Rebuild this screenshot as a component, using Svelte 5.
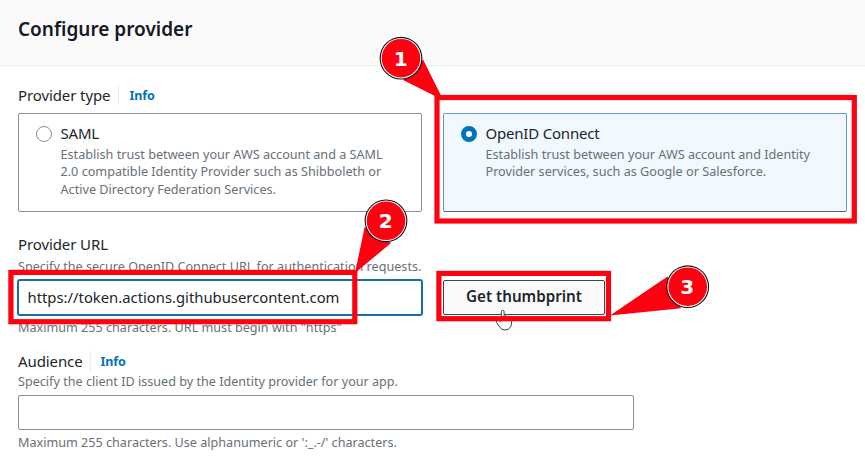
<script>
  const choices = [
    {
      title: 'SAML',
      lines: [
        'Establish trust between your AWS account and a SAML',
        '2.0 compatible Identity Provider such as Shibboleth or',
        'Active Directory Federation Services.'
      ]
    },
    {
      title: 'OpenID Connect',
      lines: [
        'Establish trust between your AWS account and Identity',
        'Provider services, such as Google or Salesforce.'
      ]
    }
  ];
  let selected = $state(1);
  let url = $state('https://token.actions.githubusercontent.com');
  let audience = $state('');

  const frames = [
    { x: 437, y: 97.5, w: 417.3, h: 123.5 },
    { x: 10.9, y: 272.4, w: 343.9, h: 49.3 },
    { x: 438.9, y: 273.4, w: 169.6, h: 45.3 }
  ];
  const callouts = [
    { n: 1, x: 401, y: 58.2, tail: '403,80 423,59.5 441.5,96.5 436,96.5' },
    { n: 2, x: 386, y: 220.8, tail: '364.7,227 391,243 355,273' },
    { n: 3, x: 687.7, y: 286.7, tail: '667.5,276.5 681,308.3 610,315.5' }
  ];
</script>

<main>
  <header><h2>Configure provider</h2></header>

  <section class="body">
    <div class="label">Provider type <a href="#info">Info</a></div>
    <div class="tiles">
      {#each choices as choice, i}
        <button class="tile" class:selected={selected === i} onclick={() => (selected = i)}>
          <span class="radio"></span>
          <span class="copy">
            <span class="title">{choice.title}</span>
            {#each choice.lines as line}<span class="line">{line}</span>{/each}
          </span>
        </button>
      {/each}
    </div>

    <div class="label url-label">Provider URL</div>
    <div class="help">Specify the secure OpenID Connect URL for authentication requests.</div>
    <div class="url-row">
      <input class="url" bind:value={url} />
      <button class="thumb">Get thumbprint</button>
    </div>
    <div class="help constraint">Maximum 255 characters. URL must begin with "https"</div>

    <div class="label aud-label">Audience <a href="#info">Info</a></div>
    <div class="help">Specify the client ID issued by the Identity provider for your app.</div>
    <input class="audience" bind:value={audience} />
    <div class="help aud-constraint">Maximum 255 characters. Use alphanumeric or ':_.-/' characters.</div>
  </section>

  <svg class="overlay" width="865" height="468" viewBox="0 0 865 468">
    <path
      d="M501.3 321V311.8Q501.3 310.3 502.7 310.3T504.1 311.8V316.4Q506 315.2 507 316.6Q509 315.6 509.6 317.2Q511.6 316.8 511.6 319V323Q511.6 326 510 327.6Q508.6 330 505 330Q501.5 330 500 327.5L496.7 322.6Q495.8 320.9 497.4 320.2Q499 319.7 501.3 322.4"
      fill="#fff"
      stroke="#3d4148"
      stroke-width="1"
      stroke-linejoin="round"
    />
    {#each frames as f}
      <rect x={f.x} y={f.y} width={f.w} height={f.h} fill="none" stroke="#ff0010" stroke-width="5.2" />
    {/each}
    {#each callouts as c}
      <polygon points={c.tail} fill="#ff0010" />
      <circle cx={c.x} cy={c.y} r="21.4" fill="#111" />
      <circle cx={c.x} cy={c.y} r="20.3" fill="#fff" />
      <circle cx={c.x} cy={c.y} r="19.3" fill="#ff0010" />
      <text x={c.x - 0.4} y={c.y + 7.4} text-anchor="middle">{c.n}</text>
    {/each}
  </svg>
</main>

<style>
  :global(body) { background: #fff; overflow: hidden; }
  main {
    position: relative;
    width: 865px;
    height: 468px;
    overflow: hidden;
    font-family: 'Noto Sans', 'Open Sans', sans-serif;
    color: #21252c;
  }
  * { box-sizing: border-box; }
  header {
    height: 66px;
    padding: 17px 18px 0;
    background: #fafafa;
    border-bottom: 1px solid #eaeded;
  }
  h2 { margin: 0; font-size: 19px; line-height: 24px; font-weight: 600; color: #16191f; }
  .body { display: flex; flex-direction: column; padding: 19px 18px 0; }
  .label { display: flex; align-items: center; height: 20px; font-size: 15px; line-height: 20px; letter-spacing: -0.1px; }
  .label a {
    margin-left: 8px;
    padding: 2px 0 0 10px;
    border-left: 1px solid #eaeded;
    color: #0073bb;
    font-size: 12.5px;
    line-height: 18px;
    font-weight: 700;
    letter-spacing: -0.1px;
    text-decoration: none;
  }
  .tiles { display: flex; gap: 21px; margin-top: 8px; }
  button { font-family: inherit; color: inherit; }
  .tile {
    display: flex;
    align-items: flex-start;
    width: 404px;
    height: 99px;
    padding: 9px 0 0 17px;
    border: 1px solid #879196;
    border-radius: 2px;
    background: #fff;
    text-align: left;
  }
  .tile.selected { background: #f1f8ff; border-color: #5b9dc9; border-bottom-color: #56616b; }
  .radio {
    flex: none;
    width: 16px;
    height: 16px;
    margin-top: 3px;
    border: 1.2px solid #879196;
    border-radius: 50%;
    background: #fff;
  }
  .selected .radio { border: 5px solid #0073bb; }
  .copy { display: flex; flex-direction: column; margin-left: 8.5px; white-space: nowrap; }
  .title { font-size: 15px; line-height: 20px; margin-bottom: 3px; letter-spacing: -0.2px; }
  .line { font-size: 12.65px; line-height: 17.4px; color: #687078; }
  .help { font-size: 12.62px; line-height: 18px; color: #687078; white-space: nowrap; }
  .url-label { margin: 22px 0 4px; }
  .url-row { display: flex; align-items: center; gap: 20px; margin: 3px 0 0 -1px; }
  input { outline: none; font-family: inherit; color: inherit; background: #fff; border-radius: 2px; }
  .url {
    width: 406px;
    height: 37px;
    padding: 0 9px 1px 8.5px;
    border: 2px solid #1a6da6;
    border-radius: 3px;
    font-size: 14.82px;
  }
  .thumb {
    width: 162px;
    height: 35px;
    padding: 0 0 3px;
    border: 1px solid #3c434b;
    border-radius: 2px;
    background: #fafafa;
    font-size: 15.2px;
    font-weight: 600;
    white-space: nowrap;
  }
  .constraint { margin-top: 3px; }
  .aud-label { margin: 14px 0 2px; }
  .aud-label a { margin-left: 7px; }
  .audience { width: 616px; height: 35px; margin-top: 4px; padding: 0 10px; border: 1px solid #879196; font-size: 14.85px; }
  .aud-constraint { margin-top: 4px; }
  .overlay { position: absolute; inset: 0; pointer-events: none; }
  .overlay text { font: bold 20px 'DejaVu Sans', sans-serif; fill: #fff; }
</style>
